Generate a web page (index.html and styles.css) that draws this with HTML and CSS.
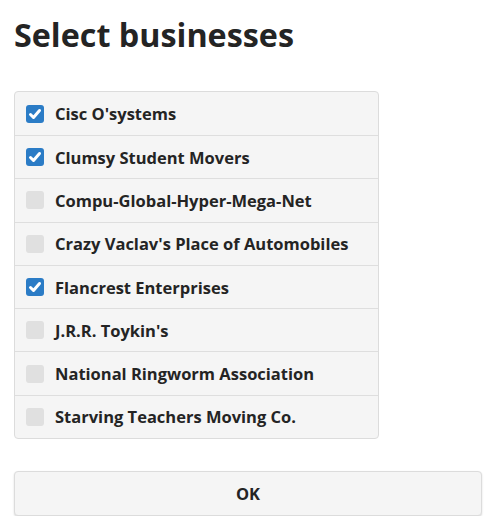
FILE: index.html
```html
<!DOCTYPE html>
<html>
<head>
<meta charset="utf-8">
<link rel="stylesheet" href="styles.css">
</head>
<body>
<h1 class="title">Select businesses</h1>
<ul class="list">
  <li class="row"><span class="box checked"><svg viewBox="0 0 18 18" width="18" height="18"><path d="M4.5 9.5 L7.5 12.5 L13.5 5.5" fill="none" stroke="#fff" stroke-width="3" stroke-linecap="round" stroke-linejoin="round"/></svg></span><span class="label">Cisc O'systems</span></li>
  <li class="row"><span class="box checked"><svg viewBox="0 0 18 18" width="18" height="18"><path d="M4.5 9.5 L7.5 12.5 L13.5 5.5" fill="none" stroke="#fff" stroke-width="3" stroke-linecap="round" stroke-linejoin="round"/></svg></span><span class="label">Clumsy Student Movers</span></li>
  <li class="row"><span class="box"></span><span class="label">Compu-Global-Hyper-Mega-Net</span></li>
  <li class="row"><span class="box"></span><span class="label">Crazy Vaclav's Place of Automobiles</span></li>
  <li class="row"><span class="box checked"><svg viewBox="0 0 18 18" width="18" height="18"><path d="M4.5 9.5 L7.5 12.5 L13.5 5.5" fill="none" stroke="#fff" stroke-width="3" stroke-linecap="round" stroke-linejoin="round"/></svg></span><span class="label">Flancrest Enterprises</span></li>
  <li class="row"><span class="box"></span><span class="label">J.R.R. Toykin's</span></li>
  <li class="row"><span class="box"></span><span class="label">National Ringworm Association</span></li>
  <li class="row"><span class="box"></span><span class="label">Starving Teachers Moving Co.</span></li>
</ul>
<button class="ok">OK</button>
</body>
</html>
```
FILE: styles.css
```css
html, body {
  margin: 0;
  padding: 0;
  background: #fff;
}
body {
  padding: 0 8px 0 14px;
  font-family: "Open Sans", "Noto Sans", sans-serif;
  color: #242424;
}
.title {
  margin: 0;
  padding-top: 12px;
  height: 91px;
  box-sizing: border-box;
  font-size: 32.3px;
  font-weight: 700;
  line-height: 44px;
}
.list {
  list-style: none;
  margin: 0;
  padding: 0;
  width: 365px;
  box-sizing: border-box;
  border: 1px solid #dcdcdc;
  border-radius: 4px;
  background: #f5f5f5;
}
.row {
  display: flex;
  align-items: center;
  height: 42.3px;
  padding-left: 11px;
  border-top: 1px solid #dedede;
}
.row:first-child {
  border-top: none;
  height: 43px;
}
.box {
  width: 18px;
  height: 18px;
  border-radius: 3px;
  background: #e0e0e0;
  display: flex;
  flex-shrink: 0;
}
.box.checked {
  background: #2b7cc6;
}
.label {
  margin-left: 11px;
  font-size: 16.5px;
  font-weight: 700;
}
.ok {
  display: block;
  margin-top: 32px;
  width: 468px;
  height: 45px;
  border: 1px solid #dcdcdc;
  border-radius: 4px;
  background: #f5f5f5;
  box-shadow: 0 1px 2px rgba(0,0,0,0.15);
  font-family: "Open Sans", "Noto Sans", sans-serif;
  font-size: 16.5px;
  font-weight: 700;
  color: #242424;
}
```
